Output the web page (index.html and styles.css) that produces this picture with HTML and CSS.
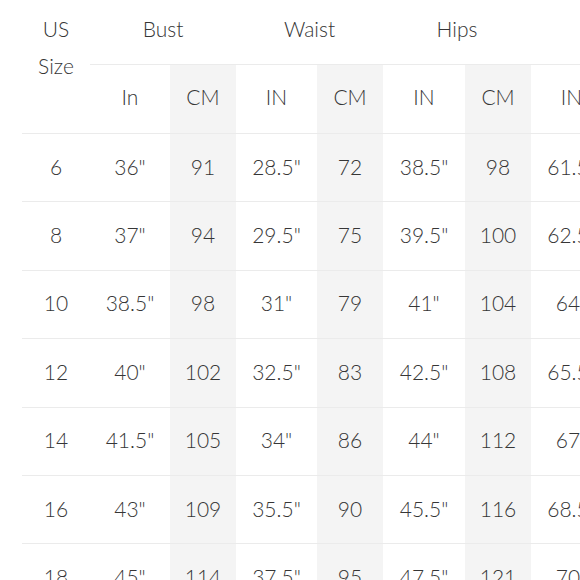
FILE: index.html
```html
<!DOCTYPE html>
<html lang="en">
<head>
<meta charset="utf-8">
<title>Size chart</title>
<link rel="stylesheet" href="styles.css">
</head>
<body>
<table class="chart">
  <colgroup>
    <col class="c-size">
    <col class="c-in1"><col class="c-cm">
    <col class="c-in2"><col class="c-cm">
    <col class="c-in3"><col class="c-cm">
    <col class="c-in2"><col class="c-cm">
  </colgroup>
  <thead>
    <tr class="groups">
      <th class="size-head" rowspan="2">US<br>Size</th>
      <th class="group" colspan="2">Bust</th>
      <th class="group" colspan="2">Waist</th>
      <th class="group" colspan="2">Hips</th>
      <th class="group" colspan="2"></th>
    </tr>
    <tr class="units">
      <th>In</th><th class="cm">CM</th>
      <th>IN</th><th class="cm">CM</th>
      <th>IN</th><th class="cm">CM</th>
      <th>IN</th><th class="cm">CM</th>
    </tr>
  </thead>
  <tbody>
    <tr><td>6</td><td>36"</td><td class="cm">91</td><td>28.5"</td><td class="cm">72</td><td>38.5"</td><td class="cm">98</td><td>61.5"</td><td class="cm">156</td></tr>
    <tr><td>8</td><td>37"</td><td class="cm">94</td><td>29.5"</td><td class="cm">75</td><td>39.5"</td><td class="cm">100</td><td>62.5"</td><td class="cm">159</td></tr>
    <tr><td>10</td><td>38.5"</td><td class="cm">98</td><td>31"</td><td class="cm">79</td><td>41"</td><td class="cm">104</td><td>64"</td><td class="cm">163</td></tr>
    <tr><td>12</td><td>40"</td><td class="cm">102</td><td>32.5"</td><td class="cm">83</td><td>42.5"</td><td class="cm">108</td><td>65.5"</td><td class="cm">166</td></tr>
    <tr><td>14</td><td>41.5"</td><td class="cm">105</td><td>34"</td><td class="cm">86</td><td>44"</td><td class="cm">112</td><td>67"</td><td class="cm">170</td></tr>
    <tr><td>16</td><td>43"</td><td class="cm">109</td><td>35.5"</td><td class="cm">90</td><td>45.5"</td><td class="cm">116</td><td>68.5"</td><td class="cm">174</td></tr>
    <tr><td>18</td><td>45"</td><td class="cm">114</td><td>37.5"</td><td class="cm">95</td><td>47.5"</td><td class="cm">121</td><td>70"</td><td class="cm">178</td></tr>
  </tbody>
</table>
</body>
</html>
```
FILE: styles.css
```css
html, body {
  margin: 0;
  padding: 0;
  overflow: hidden;
  background: #ffffff;
}

body {
  font-family: "Lato", "Open Sans", sans-serif;
  font-size: 21px;
  font-weight: 300;
  color: #363636;
}

.chart {
  margin-left: 22px;
  border-collapse: separate;
  border-spacing: 0;
  table-layout: fixed;
  width: 656px;
}

.c-size { width: 68px; }
.c-in1 { width: 80px; }
.c-in2 { width: 81px; }
.c-in3 { width: 82px; }
.c-cm { width: 66px; }

.chart th,
.chart td {
  font-weight: 300;
  text-align: center;
  padding: 0;
  box-sizing: border-box;
}

.groups th {
  height: 65px;
  vertical-align: top;
  padding-top: 10px;
  line-height: 37px;
}

.size-head {
  border-bottom: 1px solid #ebebeb;
}

.group {
  border-bottom: 1px solid #ebebeb;
}

.units th {
  height: 69px;
  vertical-align: middle;
  line-height: 24px;
  padding-bottom: 4px;
  border-bottom: 1px solid #ebebeb;
}

.chart td {
  height: 68.4px;
  border-bottom: 1px solid #ebebeb;
  vertical-align: middle;
  line-height: 24px;
  padding-bottom: 2px;
}

.chart .cm {
  background: #f4f4f4;
}
```
